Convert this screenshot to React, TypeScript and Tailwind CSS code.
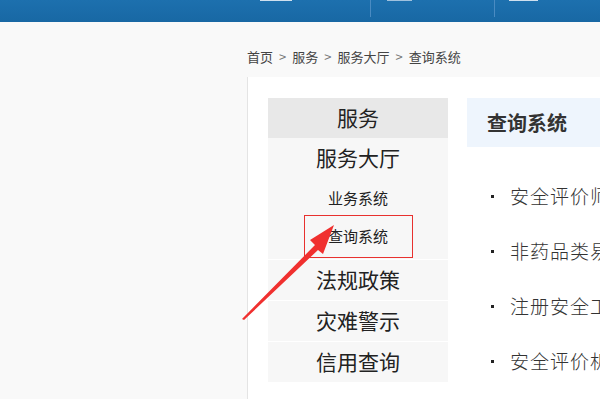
import React from "react";

const cjk = { fontFamily: '"Noto Sans CJK SC", "Noto Sans", sans-serif' };

const crumbs = ["首页", "服务", "服务大厅", "查询系统"];
const menuBottom = ["法规政策", "灾难警示", "信用查询"];
const results = ["安全评价师查询", "非药品类易制毒化学品", "注册安全工程师查询", "安全评价机构查询"];

function TopBar() {
  return (
    <div className="relative h-[22px] bg-gradient-to-b from-[#1d70ae] to-[#1868a4] overflow-hidden">
      <div className="absolute left-[260px] top-0 h-[1px] w-[32px] bg-[#cfe0ef]" />
      <div className="absolute left-[387px] top-0 h-[1px] w-[25px] bg-[#9fc1de]" />
      <div className="absolute left-[509px] top-0 h-[1px] w-[29px] bg-[#cfe0ef]" />
      <div className="absolute left-[370px] top-0 h-[17px] w-[1px] bg-[#4a8bc2]" />
      <div className="absolute left-[494px] top-0 h-[17px] w-[1px] bg-[#4a8bc2]" />
    </div>
  );
}

function Arrow() {
  return (
    <svg className="absolute left-0 top-0 pointer-events-none" width="600" height="399">
      <polygon points="242,319 244,320 318,250 323,254 334,225 310,240 315,245" fill="#f0302f" />
    </svg>
  );
}

export default function App() {
  return (
    <div className="relative w-[600px] h-[399px] overflow-hidden bg-[#f9f9f9]" style={cjk}>
      <TopBar />
      <div className="pl-[247px] pt-[26px] h-[55px] text-[13px] text-[#444] leading-[18px] flex">
        {crumbs.map((c, i) => (
          <span key={c} className="flex">
            {i > 0 && <span className="mx-[6px] text-[#777]">&gt;</span>}
            {c}
          </span>
        ))}
      </div>
      <div className="ml-[247px] h-[322px] bg-white border-l border-[#e4e4e4] flex pl-[20px] pt-[21px] gap-[19px]">
        <div className="w-[180px] shrink-0 flex flex-col text-[#222]">
          <div className="h-[40px] bg-[#e8e8e8] flex items-center justify-center text-[21px]">服务</div>
          <div className="bg-[#f7f7f7] flex flex-col border-b border-white">
            <div className="h-[40px] flex items-center justify-center text-[21px]">服务大厅</div>
            <div className="h-[37px] flex items-center justify-center text-[15px] pt-[4px]">业务系统</div>
            <div className="mx-auto w-[109px] h-[43px] border border-[#e8312f] flex items-center justify-center text-[15px] mb-[1px]">
              查询系统
            </div>
          </div>
          {menuBottom.map((m, i) => (
            <div
              key={m}
              className={
                i < menuBottom.length - 1
                  ? "h-[41px] bg-[#f7f7f7] border-b border-white flex items-center justify-center text-[21px]"
                  : "h-[40px] bg-[#f7f7f7] flex items-center justify-center text-[21px]"
              }
            >
              {m}
            </div>
          ))}
        </div>
        <div className="flex-1 min-w-0">
          <div className="h-[49px] w-[200px] bg-[#eef5fd] flex items-center pl-[20px] text-[20px] font-bold text-[#333]">
            查询系统
          </div>
          <ul className="pt-[22px] pl-[24px]">
            {results.map((r) => (
              <li key={r} className="h-[55px] flex items-center whitespace-nowrap">
                <span className="w-[3px] h-[3px] bg-[#222] mr-[16px] shrink-0" />
                <span className="text-[19px] font-light text-[#333] tracking-[1px]">{r}</span>
              </li>
            ))}
          </ul>
        </div>
      </div>
      <Arrow />
    </div>
  );
}
